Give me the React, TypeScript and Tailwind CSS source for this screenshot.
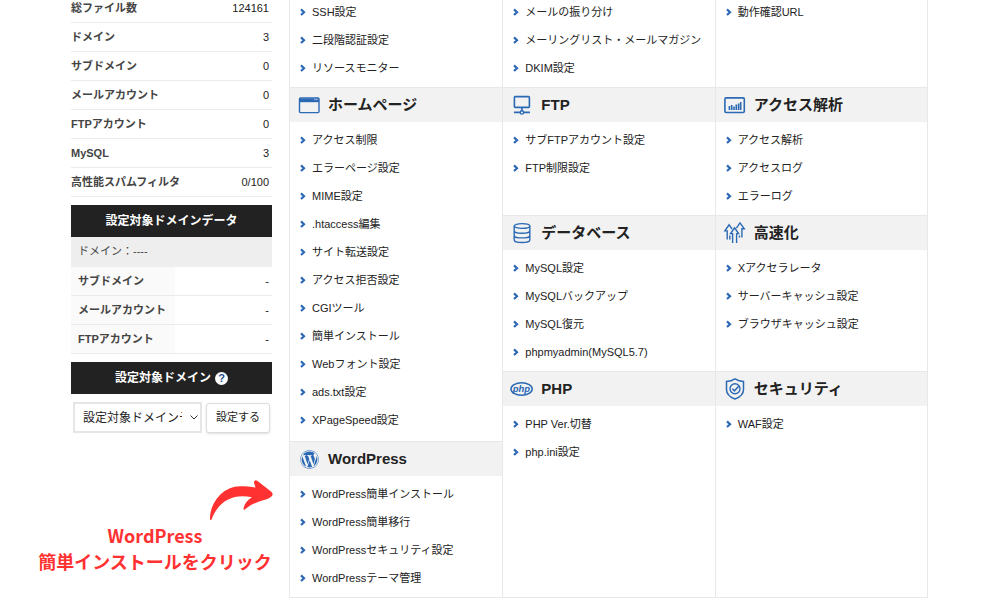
import type { ReactNode } from "react";
import { FaWordpress } from "react-icons/fa";

const BLUE = "#2b69b4";

function Icon({ children }: { children: ReactNode }) {
  return (
    <svg viewBox="0 0 22 22" className="h-[22px] w-[22px] shrink-0 overflow-visible" fill="none" stroke={BLUE} strokeWidth="1.4" aria-hidden="true">
      {children}
    </svg>
  );
}

const icons: Record<string, ReactNode> = {
  window: (
    <Icon>
      <rect x="1.5" y="4" width="19.5" height="14.6" rx="1" />
      <path d="M1.5 4.6h19.5v3H1.5z" fill={BLUE} stroke="none" />
      <path d="M1.5 7.5H21" />
      <path d="M16.4 5.6h1M18.4 5.6h1" stroke="#fff" strokeWidth="1" />
    </Icon>
  ),
  ftp: (
    <Icon>
      <rect x="3.4" y="2.6" width="15" height="10.8" rx="0.8" strokeWidth="1.6" />
      <path d="M10.900 13.400v3.200M2.900 18.400h6M12.900 18.400h6" strokeWidth="1.6" />
      <circle cx="10.900" cy="18.400" r="1.7" />
    </Icon>
  ),
  chart: (
    <Icon>
      <rect x="0.9" y="3.900" width="19.4" height="14.6" rx="1.2" strokeWidth="1.6" />
      <path d="M5.400 16v-4M7.700 16v-5M10 16v-3.600M12.300 16v-5.600M14.600 16v-6.600M16.700 16V8" strokeWidth="1.6" />
    </Icon>
  ),
  database: (
    <Icon>
      <ellipse cx="11" cy="4" rx="7.800" ry="2.400" />
      <path d="M3.200 4v14c0 1.400 3.500 2.500 7.800 2.500s7.800-1.100 7.800-2.500V4M3.200 8.700c0 1.400 3.500 2.500 7.800 2.500s7.800-1.100 7.800-2.500M3.200 13.400c0 1.400 3.500 2.500 7.800 2.500s7.800-1.100 7.800-2.500" />
    </Icon>
  ),
  arrows: (
    <Icon>
      <path d="M8.600 21V11.600H6.600L10.600 5.800l4 5.800H12.600V21" />
      <path d="M3.200 17.500V8.900H0.900L5.100 2.800l3 4.300M5.800 17.500v-4" />
      <path d="M15.500 15.500v-2M17.900 15.500V6.800h2.400L16 0.900l-3.600 5.200" />
    </Icon>
  ),
  php: (
    <Icon>
      <ellipse cx="10.600" cy="11" rx="10.600" ry="6.200" strokeWidth="1.5" />
      <text x="10.400" y="13.500" textAnchor="middle" fontFamily="'Liberation Sans', Arial, sans-serif" fontSize="9.5" fontStyle="italic" fill={BLUE} stroke="none">
        php
      </text>
    </Icon>
  ),
  shield: (
    <Icon>
      <path d="M11 0.900c2.600 1.600 5.400 2.400 8.500 2.500v8c0 4.500-3.400 7.600-8.500 9.600-5.100-2-8.500-5.100-8.500-9.600v-8C5.600 3.300 8.400 2.500 11 0.900z" strokeWidth="1.5" />
      <circle cx="11" cy="10.800" r="5" />
      <path d="M8.300 10.700l2.100 2.100 4.300-4.600" strokeWidth="1.5" />
    </Icon>
  ),
  wordpress: (
    <span className="flex h-[22px] w-[22px] shrink-0 items-center justify-center">
      <FaWordpress size={19} color={BLUE} aria-hidden="true" />
    </span>
  ),
};

function Links({ items, className = "" }: { items: string[]; className?: string }) {
  return (
    <ul className={`pb-[5px] ${className}`}>
      {items.map((item) => (
        <li key={item} className="flex h-7 items-center gap-1.5 pl-2.5">
          <svg viewBox="0 0 6 8" className="h-2 w-1.5 shrink-0" fill="none" stroke={BLUE} strokeWidth="2.2" aria-hidden="true">
            <path d="M1 1.400l3 2.800-3 2.800" />
          </svg>
          <a href="#" className="whitespace-nowrap">
            {item}
          </a>
        </li>
      ))}
    </ul>
  );
}

function Section({ icon, title, items, className = "" }: { icon: string; title: string; items: string[]; className?: string }) {
  return (
    <section className={className}>
      <h2 className="mb-1 flex h-[35px] items-center gap-2 border-t border-[#e8e8e8] bg-[#f2f2f2] pl-2 text-[15px] font-bold whitespace-nowrap">
        {icons[icon]}
        {title}
      </h2>
      <Links items={items} />
    </section>
  );
}

const usage = [
  ["総ファイル数", "124161"],
  ["ドメイン", "3"],
  ["サブドメイン", "0"],
  ["メールアカウント", "0"],
  ["FTPアカウント", "0"],
  ["MySQL", "3"],
  ["高性能スパムフィルタ", "0/100"],
];

const domainUsage = ["サブドメイン", "メールアカウント", "FTPアカウント"];

function Sidebar() {
  return (
    <aside className="w-[201px] shrink-0">
      <table className="w-full">
        <tbody>
          {usage.map(([label, value], i) => (
            <tr key={label} className={i === 0 ? "h-[22px] border-b border-[#ebebeb] align-top" : "h-[29px] border-b border-[#ebebeb]"}>
              <th scope="row" className="text-left leading-4 font-bold text-[#444]">
                {label}
              </th>
              <td className="pr-[3px] text-right leading-4">{value}</td>
            </tr>
          ))}
        </tbody>
      </table>

      <h2 className="mt-2 flex h-8 items-center justify-center bg-[#222] text-xs font-bold text-white">設定対象ドメインデータ</h2>
      <p className="flex h-[30px] items-center bg-[#eee] pl-[7px] text-[#444]">ドメイン：----</p>
      <table className="w-full">
        <tbody>
          {domainUsage.map((label) => (
            <tr key={label} className="h-[29px] border-b border-[#ebebeb]">
              <th scope="row" className="w-[104px] bg-[#fafafa] pl-[7px] text-left leading-4 font-bold whitespace-nowrap text-[#444]">
                {label}
              </th>
              <td className="pr-[3px] text-right leading-4">-</td>
            </tr>
          ))}
        </tbody>
      </table>

      <h2 className="mt-2 flex h-8 items-center justify-center gap-1 bg-[#222] text-xs font-bold text-white">
        <label htmlFor="target-domain">設定対象ドメイン</label>
        <span className="flex h-[13px] w-[13px] items-center justify-center rounded-full bg-white text-[11px] leading-none text-[#1d4f91]">?</span>
      </h2>
      <form className="mt-2 flex items-center gap-1 px-0.5">
        <div className="relative min-w-0 flex-1">
          <select id="target-domain" className="block h-[31px] w-full appearance-none border-2 border-[#e6e6e6] bg-white pr-[18px] pl-2 text-xs">
            <option>設定対象ドメインデータ</option>
          </select>
          <svg viewBox="0 0 8 5" className="pointer-events-none absolute top-[13px] right-1 h-[5px] w-2" fill="none" stroke="#333" aria-hidden="true">
            <path d="M0.500 0.500L4 4l3.500-3.500" />
          </svg>
        </div>
        <button type="button" className="h-[30px] w-16 shrink-0 rounded-[3px] border border-[#ddd] bg-white shadow">
          設定する
        </button>
      </form>
    </aside>
  );
}

export default function App() {
  return (
    <div
      lang="ja"
      className="relative flex min-h-screen gap-[17px] overflow-hidden bg-white pr-[72px] pb-0.5 pl-[71px] font-['Liberation_Sans',Arial,'Noto_Sans_CJK_JP',sans-serif] text-[11px] text-[#222]"
    >
      <Sidebar />

      <main className="-mt-0.5 flex min-w-0 flex-1 flex-col border-x border-b border-[#e8e8e8]">
        <div className="grid grid-cols-3">
          <Links items={["SSH設定", "二段階認証設定", "リソースモニター"]} />
          <Links className="border-l border-[#e8e8e8]" items={["メールの振り分け", "メーリングリスト・メールマガジン", "DKIM設定"]} />
          <Links className="border-l border-[#e8e8e8]" items={["動作確認URL"]} />
        </div>

        <div className="grid flex-1 grid-cols-3">
          <div className="flex flex-col">
            <Section
              className="flex-1"
              icon="window"
              title="ホームページ"
              items={[
                "アクセス制限",
                "エラーページ設定",
                "MIME設定",
                ".htaccess編集",
                "サイト転送設定",
                "アクセス拒否設定",
                "CGIツール",
                "簡単インストール",
                "Webフォント設定",
                "ads.txt設定",
                "XPageSpeed設定",
              ]}
            />
            <Section
              icon="wordpress"
              title="WordPress"
              items={["WordPress簡単インストール", "WordPress簡単移行", "WordPressセキュリティ設定", "WordPressテーマ管理"]}
            />
          </div>

          <div className="col-span-2 grid grid-cols-2 grid-rows-[auto_auto_1fr]">
            <Section className="border-l border-[#e8e8e8]" icon="ftp" title="FTP" items={["サブFTPアカウント設定", "FTP制限設定"]} />
            <Section className="border-l border-[#e8e8e8]" icon="chart" title="アクセス解析" items={["アクセス解析", "アクセスログ", "エラーログ"]} />
            <Section
              className="border-l border-[#e8e8e8]"
              icon="database"
              title="データベース"
              items={["MySQL設定", "MySQLバックアップ", "MySQL復元", "phpmyadmin(MySQL5.7)"]}
            />
            <Section
              className="border-l border-[#e8e8e8]"
              icon="arrows"
              title="高速化"
              items={["Xアクセラレータ", "サーバーキャッシュ設定", "ブラウザキャッシュ設定"]}
            />
            <Section className="border-l border-[#e8e8e8]" icon="php" title="PHP" items={["PHP Ver.切替", "php.ini設定"]} />
            <Section className="border-l border-[#e8e8e8]" icon="shield" title="セキュリティ" items={["WAF設定"]} />
          </div>
        </div>
      </main>

      <div className="absolute top-[478px] left-[34px] flex w-[242px] flex-col">
        <svg viewBox="0 0 64 44" className="mr-[3px] h-11 w-16 self-end" fill="#ff3131" aria-hidden="true">
          <path d="M1 41.500C0.500 26 13 8.500 31 8.200c5-.1 10 .5 15.500 1.200l-1.300-4c-.7-2.500 1.200-4 3-2.600L62 13.500c1.600 1.300 2 3 1.100 4.300-2 2.400-5 3.300-9 4.500-7 2.200-13 4.500-18.300 9.300-1.500 1-1.500-1-.9-2.700 1.300-3.800 4-7 8-9.600C24 15.500 9.500 23 2.500 41.500c-.4.700-1.200.7-1.500 0z" />
        </svg>
        <p className="flex h-[52px] flex-col items-center font-['Noto_Sans_CJK_JP',sans-serif] text-lg leading-[26px] font-bold whitespace-nowrap text-[#ff3131]">
          <span>WordPress</span>
          <span>簡単インストールをクリック</span>
        </p>
      </div>
    </div>
  );
}
